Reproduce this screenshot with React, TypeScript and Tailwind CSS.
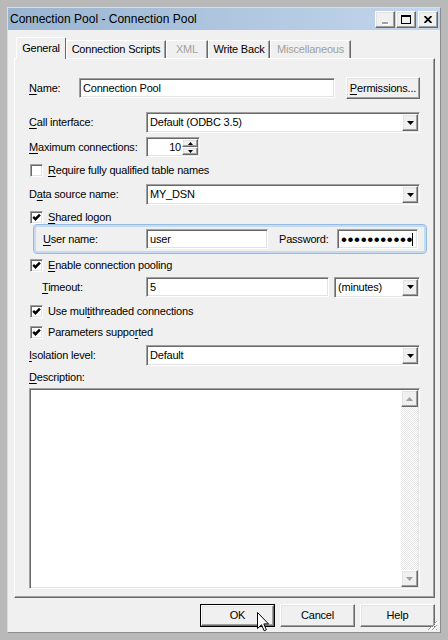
import type { ReactNode } from 'react';

const sunken =
  "border border-t-[#a0a0a0] border-l-[#a0a0a0] border-b-white border-r-white shadow-[inset_1px_1px_0_#696969,inset_-1px_-1px_0_#e3e3e3]";
const raised =
  "border border-t-white border-l-white border-b-[#696969] border-r-[#696969] shadow-[inset_-1px_-1px_0_#a0a0a0,inset_1px_1px_0_#e3e3e3]";

function U({ children }: { children: ReactNode }) {
  return <span className="underline underline-offset-[2px]">{children}</span>;
}

function Arrow({ grey, up }: { grey?: boolean; up?: boolean }) {
  return (
    <svg width="7" height="4" viewBox="0 0 7 4">
      <path d={up ? "M0 4h7L3.5 0z" : "M0 0h7L3.5 4z"} fill={grey ? "#a0a0a0" : "#000"} />
    </svg>
  );
}

function DropBtn() {
  return (
    <div className={`w-[16px] h-full bg-[#f0f0f0] flex items-center justify-center ${raised}`}>
      <Arrow />
    </div>
  );
}

function Select({ value, className }: { value: string; className: string }) {
  return (
    <div className={`${className} h-[21px] bg-white flex p-[1px] ${sunken}`}>
      <span className="flex-1 pl-[2px] flex items-center">{value}</span>
      <DropBtn />
    </div>
  );
}

function Input({ value, className }: { value?: ReactNode; className: string }) {
  return (
    <div className={`${className} h-[20px] bg-white flex items-center pl-[3px] ${sunken}`}>
      {value}
    </div>
  );
}

function Check({ checked }: { checked?: boolean }) {
  return (
    <div className={`w-[13px] h-[13px] bg-white shrink-0 ${sunken}`}>
      {checked && (
        <svg width="11" height="11" viewBox="0 0 11 11">
          <path d="M2.2 4.8l2.3 2.4 4.4-4.6" stroke="#000" strokeWidth="2.4" fill="none" />
        </svg>
      )}
    </div>
  );
}

function CheckRow({ mt, checked, children }: { mt: string; checked?: boolean; children: ReactNode }) {
  return (
    <div className={`${mt} h-[13px] flex items-center pl-[1px]`}>
      <Check checked={checked} />
      <span className="ml-[5px]">{children}</span>
    </div>
  );
}

function Tab({ w, sel, dim, children }: { w: string; sel?: boolean; dim?: boolean; children: ReactNode }) {
  if (sel) {
    return (
      <div
        className={`${w} h-[22px] bg-[#f0f0f0] border-l border-t border-r border-l-white border-t-white border-r-[#696969] rounded-t-[2px] flex items-center justify-center relative z-10`}
      >
        {children}
      </div>
    );
  }
  return (
    <div
      className={`${w} h-[18px] mb-[1px] border-l border-t border-r border-l-white border-t-white border-r-[#696969] shadow-[inset_-1px_0_0_#a0a0a0] flex items-center justify-center ${dim ? "text-[#a0a0a0]" : ""}`}
    >
      {children}
    </div>
  );
}

function Btn({ children, def }: { children: ReactNode; def?: boolean }) {
  const inner = (
    <div className={`w-full h-full bg-[#f0f0f0] flex items-center justify-center ${raised}`}>{children}</div>
  );
  return def ? (
    <div className="w-[75px] h-[23px] border border-black">{inner}</div>
  ) : (
    <div className="w-[75px] h-[23px]">{inner}</div>
  );
}

export default function App() {
  return (
    <div className="relative w-[448px] h-[640px] bg-[#b9b9b9] p-[7px] font-['Liberation_Sans',Arial,sans-serif] text-[11px] tracking-[-0.2px] text-black">
      <div className="w-[434px] h-[626px] border border-t-[#dcdcdc] border-l-[#dcdcdc] border-b-[#8c8c8c] border-r-[#8c8c8c] flex flex-col">
        {/* title bar */}
        <div className="h-[22px] bg-linear-to-r from-[#99b4d1] to-[#c3d7ec] flex items-center pl-[2px] text-[12px] tracking-normal">
          <span>Connection Pool - Connection Pool</span>
          <div className="ml-auto mr-[2px] mt-[1px] flex gap-[1px]">
            <div className={`w-[20px] h-[17px] bg-[#f0f0f0] flex items-end justify-center pb-[3px] ${raised}`}>
              <div className="w-[6px] h-[2px] bg-[#a0a0a0] shadow-[1px_1px_0_#fff]" />
            </div>
            <div className={`w-[20px] h-[17px] bg-[#f0f0f0] flex items-center justify-center ${raised}`}>
              <div className="w-[10px] h-[9px] border border-black border-t-2" />
            </div>
            <div className={`ml-[1px] w-[20px] h-[17px] bg-[#f0f0f0] flex items-center justify-center ${raised}`}>
              <svg width="8" height="7" viewBox="0 0 8 7">
                <path d="M0.5 0L7.5 7M7.5 0L0.5 7" stroke="#000" strokeWidth="1.8" />
              </svg>
            </div>
          </div>
        </div>

        {/* body */}
        <div className="relative flex-1 bg-[#f0f0f0] flex flex-col">
          <div className="flex items-end h-[22px] mt-[7px] ml-[8px] -mb-px relative z-10">
            <Tab w="w-[50px]" sel>General</Tab>
            <Tab w="w-[100px]">Connection Scripts</Tab>
            <Tab w="w-[42px]" dim>XML</Tab>
            <Tab w="w-[62px]">Write Back</Tab>
            <Tab w="w-[81px]" dim>Miscellaneous</Tab>
          </div>

          <div className="ml-[6px] w-[421px] h-[540px] border border-t-white border-l-white border-b-[#696969] border-r-[#696969] shadow-[inset_-1px_-1px_0_#a0a0a0] flex flex-col pl-[14px] pr-[14px]">
            <div className="mt-[18px] h-[22px] flex items-center">
              <span className="w-[50px]"><U>N</U>ame:</span>
              <Input className="w-[256px]" value="Connection Pool" />
              <div className={`ml-auto w-[74px] h-[22px] bg-[#f0f0f0] flex items-center justify-center ${raised}`}>
                <span><U>P</U>ermissions...</span>
              </div>
            </div>

            <div className="mt-[13px] h-[21px] flex items-center">
              <span className="w-[117px]"><U>C</U>all interface:</span>
              <Select className="w-[274px]" value="Default (ODBC 3.5)" />
            </div>

            <div className="mt-[4px] h-[20px] flex items-center">
              <span className="w-[117px]"><U>M</U>aximum connections:</span>
              <div className={`w-[54px] h-[20px] bg-white flex p-[1px] ${sunken}`}>
                <span className="flex-1 flex items-center justify-end pr-[1px]">10</span>
                <div className="w-[16px] flex flex-col">
                  <div className={`h-[9px] bg-[#f0f0f0] flex items-center justify-center ${raised}`}>
                    <svg width="5" height="3" viewBox="0 0 5 3"><path d="M0 3h5L2.5 0z" fill="#000" /></svg>
                  </div>
                  <div className={`h-[9px] bg-[#f0f0f0] flex items-center justify-center ${raised}`}>
                    <svg width="5" height="3" viewBox="0 0 5 3"><path d="M0 0h5L2.5 3z" fill="#000" /></svg>
                  </div>
                </div>
              </div>
            </div>

            <CheckRow mt="mt-[7px]"><U>R</U>equire fully qualified table names</CheckRow>

            <div className="mt-[7px] h-[21px] flex items-center">
              <span className="w-[117px]">D<U>a</U>ta source name:</span>
              <Select className="w-[274px]" value="MY_DSN" />
            </div>

            <CheckRow mt="mt-[6px]" checked><U>S</U>hared logon</CheckRow>

            <div className="self-start ml-[4px] w-[394px] h-[30px] rounded-[4px] border border-[#98bbe0] shadow-[inset_0_0_0_2px_#c4daf0] flex items-center pl-[9px]">
              <span className="w-[103px]"><U>U</U>ser name:</span>
              <Input className="w-[122px]" value="user" />
              <span className="ml-[11px] w-[58px]">Password:</span>
              <Input
                className="w-[81px]"
                value={
                  <span className="flex items-center">
                    <span className="text-[17px] tracking-[0.6px] leading-none">{'•'.repeat(11)}</span>
                    <span className="w-[1px] h-[13px] bg-black -ml-[1px]" />
                  </span>
                }
              />
            </div>

            <CheckRow mt="mt-[5px]" checked><U>E</U>nable connection pooling</CheckRow>

            <div className="mt-[5px] h-[20px] flex items-center">
              <span className="ml-[13px] w-[104px]"><U>T</U>imeout:</span>
              <Input className="w-[183px]" value="5" />
              <Select className="ml-[5px] w-[86px]" value="(minutes)" />
            </div>

            <CheckRow mt="mt-[8px]" checked>Use mul<U>t</U>ithreaded connections</CheckRow>
            <CheckRow mt="mt-[8px]" checked>Parameters suppo<U>r</U>ted</CheckRow>

            <div className="mt-[6px] h-[21px] flex items-center">
              <span className="w-[117px]"><U>I</U>solation level:</span>
              <Select className="w-[274px]" value="Default" />
            </div>

            <div className="mt-[5px] h-[13px] flex items-center">
              <span><U>D</U>escription:</span>
            </div>

            <div className={`mt-[4px] w-[391px] h-[201px] bg-white flex justify-end p-[1px] ${sunken}`}>
              <div className="w-[17px] flex flex-col">
                <div className={`h-[17px] bg-[#f0f0f0] flex items-center justify-center ${raised}`}>
                  <Arrow grey up />
                </div>
                <div className="flex-1 bg-[image:repeating-conic-gradient(#ffffff_0%_25%,#e6e6e6_0%_50%)] bg-[length:2px_2px]" />
                <div className={`h-[17px] bg-[#f0f0f0] flex items-center justify-center ${raised}`}>
                  <Arrow grey />
                </div>
              </div>
            </div>
          </div>

          <div className="mt-[6px] flex justify-end gap-[5px] pr-[5px]">
            <Btn def>OK</Btn>
            <Btn>Cancel</Btn>
            <Btn>Help</Btn>
          </div>

          <svg className="absolute right-[2px] bottom-[1px]" width="11" height="11" viewBox="0 0 11 11">
            <path d="M10 1L1 10M10 5L5 10M10 9L9 10" stroke="#a0a0a0" strokeWidth="1" />
            <path d="M11 2L2 11M11 6L6 11" stroke="#fff" strokeWidth="1" />
          </svg>
        </div>
      </div>

      <svg className="absolute left-[257px] top-[612px]" width="13" height="20" viewBox="0 0 13 20">
        <path
          d="M0.5 0.5V16.5L4.5 12.8L7.2 18.8L9.4 17.8L6.8 11.9H11.5Z"
          fill="#fff"
          stroke="#000"
          strokeWidth="1"
          strokeLinejoin="round"
        />
      </svg>
    </div>
  );
}
